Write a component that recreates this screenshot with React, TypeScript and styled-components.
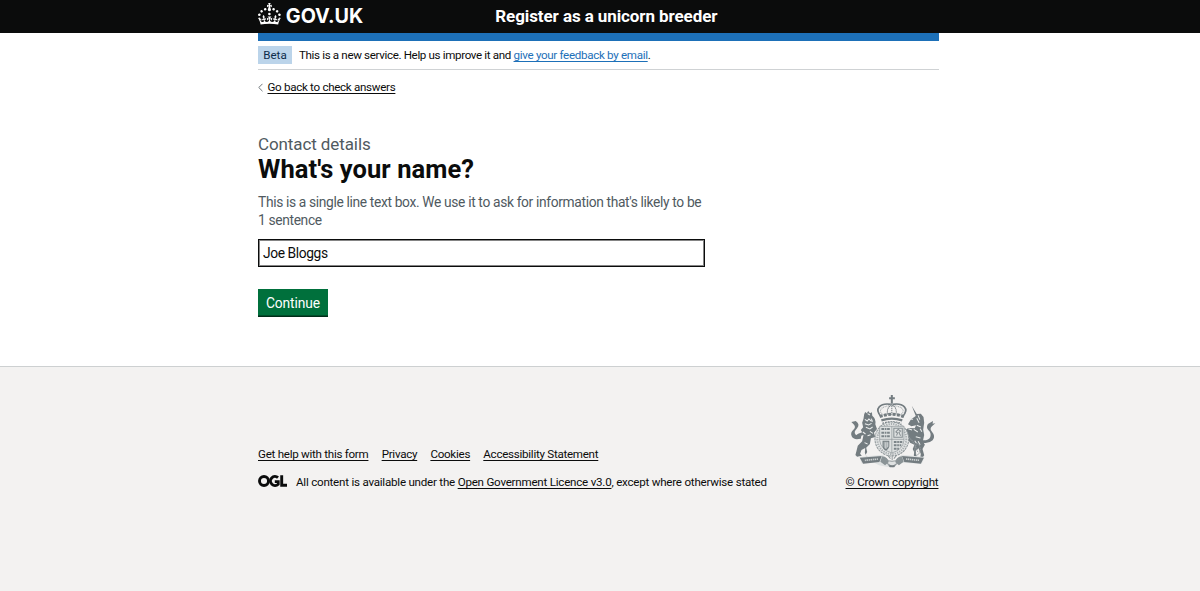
import React from "react";
import styled, { createGlobalStyle } from "styled-components";

const GlobalStyle = createGlobalStyle`
  *, *::before, *::after { box-sizing: border-box; }
  body {
    margin: 0;
    background: #f3f2f1;
    color: #0b0c0c;
    font-family: Roboto, "Liberation Sans", sans-serif;
    font-size: 11.6px;
    -webkit-font-smoothing: antialiased;
  }
  h1, p, ul { margin: 0; padding: 0; font-weight: 400; }
`;

const Page = styled.div`
  display: flex;
  flex-direction: column;
  min-height: 591px;
  background: #ffffff;
`;

const Container = styled.div`
  width: 680.5px;
  margin: 0 auto 0 258px;
`;

const Header = styled.header`
  height: 33px;
  background: #0b0c0c;
  color: #ffffff;
`;

const HeaderRow = styled(Container)`
  display: flex;
  align-items: center;
  height: 32px;
`;

const Brand = styled.div`
  display: flex;
  align-items: center;
  width: 237.3px;
  gap: 5px;
`;

const BrandName = styled.span`
  font-family: Inter, Roboto, sans-serif;
  font-size: 19.8px;
  line-height: 28px;
  font-weight: 700;
  letter-spacing: 0;
  white-space: nowrap;
`;

const CrownSvg = styled.svg`
  width: 22.8px;
  height: 21.4px;
  margin-top: -4px;
  fill: #ffffff;
`;

const ServiceName = styled.span`
  font-size: 17px;
  font-weight: 700;
  letter-spacing: -0.09px;
  white-space: nowrap;
`;

const BlueBar = styled.div`
  height: 7.5px;
  background: #1d70b8;
`;

const Main = styled.main`
  height: 333px;
`;

const PhaseBanner = styled.div`
  display: flex;
  align-items: center;
  gap: 7px;
  height: 29px;
  border-bottom: 1px solid #cfd2d4;
`;

const Tag = styled.strong`
  height: 18px;
  width: 34px;
  text-align: center;
  line-height: 18px;
  background: #bbd4ea;
  color: #0c2d4a;
  font-weight: 400;
`;

const PhaseText = styled.p`
  line-height: 18px;
  letter-spacing: -0.35px;
  white-space: nowrap;
`;

const Link = styled.a<{ $blue?: boolean; $spacing?: number }>`
  color: ${(p) => (p.$blue ? "#1d70b8" : "#0b0c0c")};
  letter-spacing: ${(p) => p.$spacing ?? -0.27}px;
  text-decoration: underline;
  text-decoration-thickness: 1px;
  text-underline-offset: 2px;
  text-decoration-skip-ink: none;
  white-space: nowrap;
`;

const BackRow = styled.div`
  display: flex;
  align-items: center;
  gap: 4.5px;
  height: 18px;
  margin-top: 8.5px;
`;

const Chevron = styled.svg`
  width: 5px;
  height: 9px;
  fill: none;
  stroke: #6f777b;
  stroke-width: 1;
`;

const Form = styled.form`
  display: flex;
  flex-direction: column;
  align-items: flex-start;
  width: 447px;
  margin-top: 36.5px;
`;

const Caption = styled.span`
  font-size: 17px;
  line-height: 22px;
  letter-spacing: -0.1px;
  color: #505a5f;
`;

const Title = styled.h1`
  && { font-weight: 700; }
  font-size: 25.5px;
  line-height: 28px;
  letter-spacing: 0.07px;
`;

const Hint = styled.p`
  margin-top: 10px;
  font-size: 13.8px;
  line-height: 18px;
  letter-spacing: -0.35px;
  color: #505a5f;
  white-space: nowrap;
`;

const TextInput = styled.input`
  width: 446.5px;
  height: 28px;
  margin-top: 10px;
  padding: 0 4px;
  border: 1px solid #0b0c0c;
  border-radius: 0;
  outline: 0;
  box-shadow: inset 0 0 0 1px rgba(11, 12, 12, 0.5);
  background: #ffffff;
  color: #0b0c0c;
  font: 400 13.8px Roboto, "Liberation Sans", sans-serif;
  letter-spacing: -0.4px;
`;

const Button = styled.button`
  width: 70px;
  height: 28px;
  margin-top: 22px;
  padding: 0;
  border: 0;
  border-radius: 0;
  background: #00703c;
  box-shadow: inset 0 -1.5px 0 #002d18;
  color: #ffffff;
  font: 400 13.8px Roboto, "Liberation Sans", sans-serif;
  letter-spacing: -0.1px;
`;

const Footer = styled.footer`
  flex: 1;
  border-top: 1px solid #cdd0d1;
  background: #f3f2f1;
`;

const FooterRow = styled(Container)`
  display: flex;
  justify-content: space-between;
  align-items: flex-end;
  padding-top: 27px;
`;

const FooterLinks = styled.ul`
  display: flex;
  gap: 13.2px;
  margin-bottom: 12px;
  line-height: 16px;
  list-style: none;
`;

const Licence = styled.div`
  display: flex;
  align-items: center;
  gap: 9px;
  line-height: 16px;
  letter-spacing: -0.23px;
  white-space: nowrap;
`;

const OglMark = styled.svg`
  width: 29px;
  height: 12px;
  margin-top: -3px;
  fill: none;
  stroke: #0b0c0c;
  stroke-width: 2.9;
`;

const Copyright = styled.div`
  display: flex;
  flex-direction: column;
  align-items: center;
  width: 93px;
  gap: 6px;
  line-height: 16px;
`;

const CrestSvg = styled.svg`
  width: 87px;
  height: 74px;
  margin-left: 1px;
`;

function Crown() {
  return (
    <CrownSvg viewBox="0 0 32 30" aria-hidden="true">
      <path d="M22.6 10.4c-1 .4-2-.1-2.4-1-.4-.9.1-2 1-2.4.9-.4 2 .1 2.4 1s-.1 2-1 2.4m-5.9 6.7c-.9.4-2-.1-2.4-1-.4-.9.1-2 1-2.4.9-.4 2 .1 2.4 1s-.1 2-1 2.4m10.8-3.7c-1 .4-2-.1-2.4-1-.4-.9.1-2 1-2.4.9-.4 2 .1 2.4 1s0 2-1 2.4m3.3 4.8c-1 .4-2-.1-2.4-1-.4-.9.1-2 1-2.4.9-.4 2 .1 2.4 1s-.1 2-1 2.4M17 4.7l2.3 1.2V2.5l-2.3.7-.2-.2.9-3h-3.4l.9 3-.2.2c-.1.1-2.3-.7-2.3-.7v3.4L15 4.7c.1.1.1.2.2.2l-1.3 4c-.1.2-.1.4-.1.6 0 1.1.8 2 1.9 2.2h.7c1-.2 1.9-1.1 1.9-2.1 0-.2 0-.4-.1-.6l-1.3-4c-.1-.2 0-.2.1-.3m-7.6 5.7c.9.4 2-.1 2.4-1 .4-.9-.1-2-1-2.4-.9-.4-2 .1-2.4 1s0 2 1 2.4m-5 3c.9.4 2-.1 2.4-1 .4-.9-.1-2-1-2.4-.9-.4-2 .1-2.4 1s.1 2 1 2.4m-3.2 4.8c.9.4 2-.1 2.4-1 .4-.9-.1-2-1-2.4-.9-.4-2 .1-2.4 1s0 2 1 2.4m14.8 11c4.4 0 8.6.3 12.3.8 1.1-4.5 2.4-7 3.7-8.8l-2.5-.9c.2 1.3.3 1.9 0 2.7-.4-.4-.8-1.1-1.1-2.3l-1.2 4c.7-.5 1.3-.8 2-.9-1.1 2.5-2.6 3.1-3.5 3-1.1-.2-1.7-1.2-1.5-2.1.3-1.2 1.5-1.5 2.1-.1 1.1-2.3-.8-3-2-2.3 1.9-1.9 2.1-3.5.6-5.6-2.1 1.6-2.1 3.2-1.2 5.5-1.2-1.4-3.2-.6-2.5 1.6.9-1.4 2.1-.5 1.9.8-.2 1.1-1.7 2.1-3.5 1.9-2.7-.2-2.9-2.1-2.9-3.6.7-.1 1.9.5 2.9 1.9l.4-4.3c-1.1 1.1-2.1 1.4-3.2 1.4.4-1.2 2.1-3 2.1-3h-5.4s1.7 1.9 2.1 3c-1.1 0-2.1-.2-3.2-1.4l.4 4.3c1-1.4 2.2-2 2.9-1.9-.1 1.5-.2 3.4-2.9 3.6-1.9.2-3.4-.8-3.5-1.9-.2-1.3 1-2.2 1.9-.8.7-2.3-1.2-3-2.5-1.6.9-2.2.9-3.9-1.2-5.5-1.5 2-1.3 3.7.6 5.6-1.2-.7-3.1 0-2 2.3.6-1.4 1.8-1.1 2.1.1.2.9-.3 1.9-1.5 2.1-.9.2-2.4-.5-3.5-3 .6 0 1.2.3 2 .9l-1.2-4c-.3 1.1-.7 1.9-1.1 2.3-.3-.8-.2-1.4 0-2.7l-2.9.9C1.3 23 2.6 25.5 3.7 30c3.7-.5 7.9-.8 12.3-.8" />
    </CrownSvg>
  );
}

function Ogl() {
  return (
    <OglMark viewBox="0 0 29 12" aria-hidden="true">
      <circle cx="6" cy="6" r="4.5" />
      <path d="M20 2.7A4.5 4.5 0 1 0 20.2 9.2V6.6H16.8" />
      <path d="M23.7 0.2V10.2H29" />
    </OglMark>
  );
}

function Crest() {
  return (
    <CrestSvg viewBox="30 18 258 222" preserveAspectRatio="none" role="img" aria-label="Royal coat of arms">
      {/* crown */}
      <g fill="none" stroke="#737c80">
        <path d="M157 21v26M149 31h17" strokeWidth="6" />
        <path d="M126 86C102 62 124 44 154 49M188 86C212 62 190 44 160 49" strokeWidth="5" />
        <path d="M132 82C112 65 130 54 154 53M182 82C202 65 184 54 160 53" stroke="#a5abad" strokeWidth="3" strokeDasharray="3 2" />
        <path d="M145 80C141 65 147 56 156 51M169 80C173 65 167 56 158 51M157 48v32" strokeWidth="3" strokeDasharray="4 2" />
        <path d="M121 86Q157 72 193 86" strokeWidth="9" strokeDasharray="9 4" />
        <path d="M126 97Q157 87 188 97" strokeWidth="7" />
        <path d="M129 106Q157 97 185 106" strokeWidth="4" strokeDasharray="5 3" />
      </g>
      {/* lion */}
      <g fill="#737c80">
        <path d="M75 79l3-7 5 4 4-7 5 7 6-3 1 10q12 9 9 26l5 14-9 11 4 13-13 4-3 17-11 11 3 13-5 9 11 10-4 5H80l4-6-7-15 1-15-11 6-4 11 5 6-14 3-5-5 3-11 4-17 13-13 4-19-10 3-6 6-8-7 8-6 12-4-4-7 7-8-3-14 4-12z" />
        <path d="M65 152q-22 5-27-7-5-12 5-20 8-7 2-15l-8-8 13-3q14 10 4 22-12 12-4 19 7 5 17 1z" />
      </g>
      <path d="M77 94l7 5 5-6 8 7M77 107l11 4 9-5M80 118l12 5 8-6M71 132l8 6M85 143l9-3M76 164l9 4M56 130l6 2M85 77l7 4M96 92l4 9M92 130l9 6" stroke="#eceeed" strokeWidth="3" fill="none" />
      {/* unicorn */}
      <g fill="#737c80">
        <path d="M216 53l15 25 12-1 8 10 2 17-3 21 3 16-4 19 6 10-7 13 5 19-7 10-5-2 2-12-7-17-8 7 2 17-8 4 1-17-4-9 5-13-13-6-8-14-9 2-4-8 11-8-7-8 12-8 19 1 4-9-14 3-10-6 9-15 14-10z" />
        <path d="M247 157q20 1 24-10 4-12-6-21-7-7-1-18l15-9-1 8 8-1-10 9q-8 8 0 16 12 14 2 26-11 11-31 7z" />
      </g>
      <path d="M218 83l-9 10 11 1M235 82l5 13M231 91l7 13M231 112l12 5M222 124l12 8M228 146l14 4M206 122l11 4M235 160l6 10M225 158l5 8M241 122l5 9" stroke="#eceeed" strokeWidth="3" fill="none" />
      <path d="M197 142c21 8 29 32 37 49M233 165q-13 17-5 35M234 166q18 23-7 40" fill="none" stroke="#90989b" strokeWidth="3" strokeDasharray="4 2" />
      {/* garter and shield */}
      <ellipse cx="157" cy="153" rx="50" ry="51" fill="#e5e7e7" stroke="#8d9598" strokeWidth="3" strokeDasharray="7 2" />
      <ellipse cx="157" cy="153" rx="43" ry="45" fill="none" stroke="#a9afb1" strokeWidth="6" strokeDasharray="4 3" />
      <path d="M121 115h72v43q-3 27-36 37-32-10-36-37z" fill="#dde0e0" stroke="#8d9598" strokeWidth="2" />
      <path d="M157 115v80M121 154h72" stroke="#8d9598" strokeWidth="2" />
      <path d="M126 123h26M126 134h26M126 145h26M163 162h25M163 172h22M163 182h15" stroke="#7b8488" strokeWidth="6" strokeDasharray="8 2 5 2" />
      <path d="M163 121h25v27h-25zM171 143l3-8-5-3 7-8 7 5-5 5 5 9" fill="none" stroke="#858d91" strokeWidth="3" />
      <path d="M131 160h17v15q-2 8-9 11-7-5-8-11z" fill="#a6adaf" stroke="#737c80" strokeWidth="3" />
      <path d="M139 163v18M145 163v14" stroke="#e3e6e6" strokeWidth="2" />
      {/* motto ribbon */}
      <path d="M61 207l69-7 13 14 15 5 15-5 13-14 68 7-8 20-65-3-13 9-24 4-25-5-14-8-37 3z" fill="#dfe2e2" />
      <path d="M62 209l65-5-7 18-48 5zM252 209l-65-5 7 18 49 5z" fill="#737c80" />
      <path d="M77 217l40-4M199 213l40 4" stroke="#cdd2d2" strokeWidth="5" strokeDasharray="3 2 5 2" />
      <path d="M128 205q17 2 20 17l-11 10-14-11zM187 205q-17 2-20 17l11 10 14-11z" fill="#8a9396" />
      <path d="M137 214q20 12 42 0M141 225l17 11 17-11M158 201v15M145 202l8 10M171 202l-8 10" fill="none" stroke="#90989b" strokeWidth="3" />
      <path d="M146 232h23l-5 6h-13z" fill="#737c80" />
    </CrestSvg>
  );
}

export default function App() {
  return (
    <Page>
      <GlobalStyle />
      <Header>
        <HeaderRow>
          <Brand>
            <Crown />
            <BrandName>GOV.UK</BrandName>
          </Brand>
          <ServiceName>Register as a unicorn breeder</ServiceName>
        </HeaderRow>
      </Header>
      <Main>
        <Container>
          <BlueBar />
          <PhaseBanner>
            <Tag>Beta</Tag>
            <PhaseText>
              This is a new service. Help us improve it and{" "}
              <Link $blue $spacing={-0.31} href="#">give your feedback by email</Link>.
            </PhaseText>
          </PhaseBanner>
          <BackRow>
            <Chevron viewBox="0 0 5 9"><path d="M4.5 .8L.8 4.5l3.7 3.7" /></Chevron>
            <Link $spacing={-0.3} href="#">Go back to check answers</Link>
          </BackRow>
          <Form>
            <Caption>Contact details</Caption>
            <Title>What's your name?</Title>
            <Hint>
              This is a single line text box. We use it to ask for information that's likely to be
              <br />1 sentence
            </Hint>
            <TextInput defaultValue="Joe Bloggs" aria-label="What's your name?" />
            <Button type="button">Continue</Button>
          </Form>
        </Container>
      </Main>
      <Footer>
        <FooterRow>
          <div>
            <FooterLinks>
              <li><Link href="#">Get help with this form</Link></li>
              <li><Link href="#">Privacy</Link></li>
              <li><Link href="#">Cookies</Link></li>
              <li><Link href="#">Accessibility Statement</Link></li>
            </FooterLinks>
            <Licence>
              <Ogl />
              <span>
                All content is available under the{" "}
                <Link $spacing={-0.23} href="#">Open Government Licence v3.0</Link>, except where otherwise stated
              </span>
            </Licence>
          </div>
          <Copyright>
            <Crest />
            <Link $spacing={-0.18} href="#">© Crown copyright</Link>
          </Copyright>
        </FooterRow>
      </Footer>
    </Page>
  );
}
